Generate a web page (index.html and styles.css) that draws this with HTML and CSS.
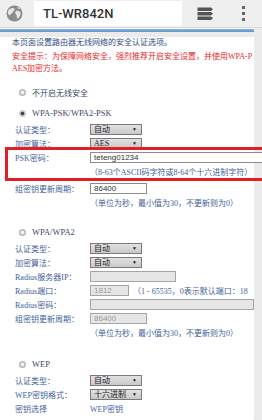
FILE: index.html
```html
<!DOCTYPE html>
<html>
<head>
<meta charset="utf-8">
<link rel="stylesheet" href="styles.css">
</head>
<body>
<header class="bar">
  <div class="globe">
    <svg width="17" height="17" viewBox="0 0 17 17">
      <circle cx="8.5" cy="8.5" r="8" fill="#8c8c8c"/>
      <path d="M3 4.5 C5 3 7 2.5 8.5 3.5 C9 5 7.5 5.5 7 7 C6.5 8.5 5 8 4.5 9.5 C4 11 2.5 10 2 8.5 C1.8 7 2.2 5.5 3 4.5Z" fill="#e6e6e6"/>
      <path d="M10 6 C11.5 5.5 13.5 6 14.5 7.5 C15 9.5 14 11.5 12.5 13 C11.5 14 10.5 13 10.8 11.5 C11 10 9.5 9.5 9.3 8.2 C9.2 7 9.5 6.3 10 6Z" fill="#e6e6e6"/>
      <path d="M11 2 C12.5 2.2 13.8 3 14.5 4.2 C13 4.3 11.8 3.6 11 2Z" fill="#e6e6e6"/>
    </svg>
  </div>
  <div class="addr">TL-WR842N</div>
  <div class="tabs">
    <svg width="17" height="14" viewBox="0 0 17 14">
      <path d="M0.5 0.5 H14 L16 2.2 L14 4 H0.5 Z" fill="#555"/>
      <path d="M0.5 5 H14 L16 6.7 L14 8.5 H0.5 Z" fill="#555"/>
      <path d="M0.5 9.5 H14 L16 11.2 L14 13 H0.5 Z" fill="#555"/>
    </svg>
  </div>
  <div class="kebab"><i></i><i></i><i></i></div>
</header>
<div class="blue"></div>
<main class="page">
  <p class="intro">本页面设置路由器无线网络的安全认证选项。</p>
  <div class="warn">
    <div class="line">安全提示：为保障网络安全，强烈推荐开启安全设置，并使用WPA-P</div>
    <div class="line">AES加密方法。</div>
  </div>

  <div class="opt opt-none"><span class="radio"></span>不开启无线安全</div>

  <div class="opt opt-psk"><span class="radio on"></span>WPA-PSK/WPA2-PSK</div>
  <div class="row first"><span class="lbl">认证类型：</span><span class="sel">自动<b>▼</b></span></div>
  <div class="row"><span class="lbl">加密算法：</span><span class="sel">AES<b>▼</b></span></div>
  <div class="hl">
    <div class="row"><span class="lbl">PSK密码：</span><span class="inp wide">teteng01234</span></div>
    <div class="row"><span class="lbl"></span><span class="hint">（8-63个ASCII码字符或8-64个十六进制字符）</span></div>
  </div>
  <div class="row"><span class="lbl">组密钥更新周期：</span><span class="inp mid">86400</span></div>
  <div class="row"><span class="lbl"></span><span class="hint">（单位为秒，最小值为30，不更新则为0）</span></div>

  <div class="opt opt-wpa"><span class="radio"></span>WPA/WPA2</div>
  <div class="row first"><span class="lbl">认证类型：</span><span class="sel">自动<b>▼</b></span></div>
  <div class="row"><span class="lbl">加密算法：</span><span class="sel">自动<b>▼</b></span></div>
  <div class="row"><span class="lbl">Radius服务器IP：</span><span class="inp off ip"></span></div>
  <div class="row"><span class="lbl">Radius端口：</span><span class="inp off port">1812</span><span class="hint porthint">（1 - 65535，0表示默认端口：18</span></div>
  <div class="row"><span class="lbl">Radius密码：</span><span class="inp off pwd"></span></div>
  <div class="row"><span class="lbl">组密钥更新周期：</span><span class="inp off mid">86400</span></div>
  <div class="row"><span class="lbl"></span><span class="hint">（单位为秒，最小值为30，不更新则为0）</span></div>

  <div class="opt opt-wep"><span class="radio"></span>WEP</div>
  <div class="row first"><span class="lbl">认证类型：</span><span class="sel">自动<b>▼</b></span></div>
  <div class="row"><span class="lbl">WEP密钥格式：</span><span class="sel">十六进制<b>▼</b></span></div>
  <div class="row"><span class="lbl">密钥选择</span><span class="val">WEP密钥</span></div>
</main>
</body>
</html>
```

FILE: styles.css
```css
* { box-sizing: border-box; margin: 0; padding: 0; }
html, body { overflow: hidden; }
body {
  width: 262px;
  height: 420px;
  background: #ebebeb;
  font-family: "Liberation Serif", "Noto Sans CJK SC", serif;
  font-size: 8px;
  color: #3a5489;
}

/* browser chrome */
.bar {
  height: 28px;
  display: flex;
  align-items: flex-start;
  background: #efefef;
  border-bottom: 1px solid #dadada;
}
.globe {
  width: 34px;
  height: 27px;
  display: flex;
  align-items: center;
  justify-content: center;
  padding-right: 6px;
}
.addr {
  width: 148px;
  height: 25px;
  margin-top: 1px;
  background: #fff;
  display: flex;
  align-items: center;
  padding-left: 9px;
  font: 500 13px Roboto, "Liberation Sans", sans-serif;
  color: #333;
}
.tabs {
  width: 46px;
  height: 27px;
  display: flex;
  align-items: center;
  justify-content: center;
}
.kebab {
  flex: 1;
  height: 27px;
  display: flex;
  flex-direction: column;
  align-items: center;
  justify-content: center;
  gap: 3px;
  padding-right: 4px;
}
.kebab i {
  width: 3px;
  height: 3px;
  background: #666;
}
.blue {
  width: 254px;
  height: 4px;
  border-top: 1px solid #fff;
  background: linear-gradient(#8ab3e3, #5f93d3);
}

/* page */
.page {
  width: 254px;
  height: 384px;
  background: #fff;
  padding-left: 12px;
  border-bottom-right-radius: 3px;
}
.intro {
  margin-top: 5px;
  line-height: 12px;
  color: #2f4d80;
  white-space: nowrap;
}
.warn {
  margin-top: 2px;
  color: #e8262a;
}
.warn .line {
  line-height: 12px;
  white-space: nowrap;
}

.opt {
  display: flex;
  align-items: center;
  gap: 6px;
  height: 12px;
  padding-left: 7px;
  font-size: 8.5px;
  color: #3c4a66;
  white-space: nowrap;
}
.opt-none { margin-top: 11px; font-size: 8px; }
.opt-psk { margin-top: 9px; }
.opt-wpa { margin-top: 17px; }
.opt-wep { margin-top: 19px; }
.radio {
  width: 7px;
  height: 7px;
  border-radius: 50%;
  background: radial-gradient(circle, #f2f2f2 0 35%, #b9b9b9 45% 100%);
  flex: none;
}
.radio.on {
  background: radial-gradient(circle, #4a4a4a 0 35%, #d0d0d0 45% 100%);
}

.row {
  display: flex;
  align-items: center;
  height: 14px;
  padding-left: 3px;
  white-space: nowrap;
  overflow: hidden;
}
.row.first { margin-top: 3px; }
.lbl {
  width: 75px;
  flex: none;
  color: #3f5f9a;
}
.sel {
  width: 52px;
  height: 11px;
  flex: none;
  border: 1px solid #7a7a7a;
  background: linear-gradient(#e2e2e2, #c9c9c9);
  color: #222;
  display: flex;
  align-items: center;
  justify-content: space-between;
  padding: 0 4px 0 3px;
  line-height: 9px;
}
.sel b {
  font-weight: normal;
  font-size: 5px;
  color: #222;
}
.inp {
  height: 11px;
  flex: none;
  border: 1px solid #8c8c8c;
  background: #fff;
  color: #333;
  padding-left: 3px;
  line-height: 9px;
  font-family: "Liberation Sans", "Noto Sans CJK SC", sans-serif;
  font-size: 8px;
}
.inp.wide { width: 200px; }
.inp.mid { width: 57px; }
.inp.ip { width: 86px; }
.inp.port { width: 39px; }
.inp.pwd { width: 164px; }
.inp.off {
  background: #e6e6e6;
  border-color: #a5a5a5;
  color: #9a9a9a;
}
.hint {
  color: #3f5f9a;
}
.porthint { margin-left: 4px; }
.val { color: #3f5f9a; }

/* red highlight annotation */
.hl {
  position: relative;
  margin: -3px -24px 0 -7px;
  border: 3px solid #e21f26;
}
.hl .row { padding-left: 7px; }
```
